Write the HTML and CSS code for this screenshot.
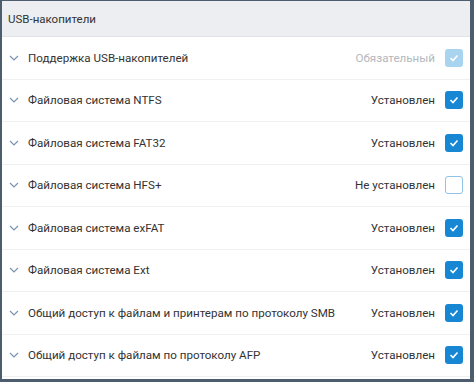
FILE: index.html
```html
<!DOCTYPE html>
<html lang="ru">
<head>
  <meta charset="UTF-8">
  <title>USB-накопители</title>
  <link rel="stylesheet" href="styles.css">
</head>
<body>
  <div class="panel">
    <div class="panel-header">USB-накопители</div>
    <ul class="list">
      <li class="row">
        <span class="chevron"><svg width="10" height="6" viewBox="0 0 10 6"><path d="M1 1l4 4 4-4" fill="none" stroke="#7b93b0" stroke-width="1.2"/></svg></span>
        <span class="name">Поддержка USB-накопителей</span>
        <span class="state muted">Обязательный</span>
        <span class="check disabled"><svg width="10" height="8" viewBox="0 0 10 8"><path d="M1.5 4l2.5 2.5 4.5-5" fill="none" stroke="#fff" stroke-width="1.6"/></svg></span>
      </li>
      <li class="row">
        <span class="chevron"><svg width="10" height="6" viewBox="0 0 10 6"><path d="M1 1l4 4 4-4" fill="none" stroke="#7b93b0" stroke-width="1.2"/></svg></span>
        <span class="name">Файловая система NTFS</span>
        <span class="state">Установлен</span>
        <span class="check on"><svg width="10" height="8" viewBox="0 0 10 8"><path d="M1.5 4l2.5 2.5 4.5-5" fill="none" stroke="#fff" stroke-width="1.6"/></svg></span>
      </li>
      <li class="row">
        <span class="chevron"><svg width="10" height="6" viewBox="0 0 10 6"><path d="M1 1l4 4 4-4" fill="none" stroke="#7b93b0" stroke-width="1.2"/></svg></span>
        <span class="name">Файловая система FAT32</span>
        <span class="state">Установлен</span>
        <span class="check on"><svg width="10" height="8" viewBox="0 0 10 8"><path d="M1.5 4l2.5 2.5 4.5-5" fill="none" stroke="#fff" stroke-width="1.6"/></svg></span>
      </li>
      <li class="row">
        <span class="chevron"><svg width="10" height="6" viewBox="0 0 10 6"><path d="M1 1l4 4 4-4" fill="none" stroke="#7b93b0" stroke-width="1.2"/></svg></span>
        <span class="name">Файловая система HFS+</span>
        <span class="state">Не установлен</span>
        <span class="check off"></span>
      </li>
      <li class="row">
        <span class="chevron"><svg width="10" height="6" viewBox="0 0 10 6"><path d="M1 1l4 4 4-4" fill="none" stroke="#7b93b0" stroke-width="1.2"/></svg></span>
        <span class="name">Файловая система exFAT</span>
        <span class="state">Установлен</span>
        <span class="check on"><svg width="10" height="8" viewBox="0 0 10 8"><path d="M1.5 4l2.5 2.5 4.5-5" fill="none" stroke="#fff" stroke-width="1.6"/></svg></span>
      </li>
      <li class="row">
        <span class="chevron"><svg width="10" height="6" viewBox="0 0 10 6"><path d="M1 1l4 4 4-4" fill="none" stroke="#7b93b0" stroke-width="1.2"/></svg></span>
        <span class="name">Файловая система Ext</span>
        <span class="state">Установлен</span>
        <span class="check on"><svg width="10" height="8" viewBox="0 0 10 8"><path d="M1.5 4l2.5 2.5 4.5-5" fill="none" stroke="#fff" stroke-width="1.6"/></svg></span>
      </li>
      <li class="row">
        <span class="chevron"><svg width="10" height="6" viewBox="0 0 10 6"><path d="M1 1l4 4 4-4" fill="none" stroke="#7b93b0" stroke-width="1.2"/></svg></span>
        <span class="name">Общий доступ к файлам и принтерам по протоколу SMB</span>
        <span class="state">Установлен</span>
        <span class="check on"><svg width="10" height="8" viewBox="0 0 10 8"><path d="M1.5 4l2.5 2.5 4.5-5" fill="none" stroke="#fff" stroke-width="1.6"/></svg></span>
      </li>
      <li class="row">
        <span class="chevron"><svg width="10" height="6" viewBox="0 0 10 6"><path d="M1 1l4 4 4-4" fill="none" stroke="#7b93b0" stroke-width="1.2"/></svg></span>
        <span class="name">Общий доступ к файлам по протоколу AFP</span>
        <span class="state">Установлен</span>
        <span class="check on"><svg width="10" height="8" viewBox="0 0 10 8"><path d="M1.5 4l2.5 2.5 4.5-5" fill="none" stroke="#fff" stroke-width="1.6"/></svg></span>
      </li>
    </ul>
  </div>
</body>
</html>
```

FILE: styles.css
```css
* {
  margin: 0;
  padding: 0;
  box-sizing: border-box;
}

body {
  font-family: Roboto, "Noto Sans", sans-serif;
  background: #4d5d6d;
  width: 474px;
  height: 382px;
  overflow: hidden;
}

.panel {
  background: #fff;
  margin: 1px 4px 3px 2px;
  height: 378px;
  overflow: hidden;
}

.panel-header {
  background: #eceef1;
  height: 36px;
  line-height: 36px;
  padding-left: 6px;
  font-size: 11.5px;
  color: #333;
  border-bottom: 1px solid #dfe2e6;
}

.list {
  list-style: none;
}

.row {
  display: flex;
  align-items: center;
  height: 42.5px;
  border-bottom: 1px solid #eef0f2;
  font-size: 11.6px;
  color: #333;
  padding: 0 7px;
  white-space: nowrap;
}

.chevron {
  width: 19px;
  display: flex;
  align-items: center;
}

.name {
  flex: 1;
}

.state {
  margin-right: 10px;
}

.state.muted {
  color: #b3b8bd;
}

.check {
  width: 18px;
  height: 18px;
  border-radius: 3px;
  display: flex;
  align-items: center;
  justify-content: center;
}

.check.on {
  background: #1787d4;
}

.check.disabled {
  background: #a9d4ef;
}

.check.off {
  border: 1.5px solid #8fc2e3;
  background: #fff;
}
```
